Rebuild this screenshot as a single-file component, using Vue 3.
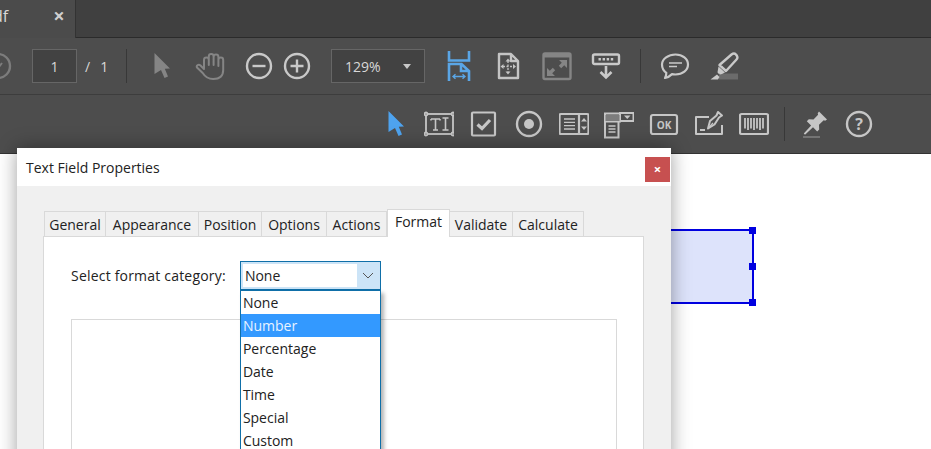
<script setup>
const tabs = ['General', 'Appearance', 'Position', 'Options', 'Actions', 'Format', 'Validate', 'Calculate']
const options = ['None', 'Number', 'Percentage', 'Date', 'Time', 'Special', 'Custom']
</script>

<template>
  <div class="page">
    <div class="tabbar">
      <div class="doc-tab">
        <span class="doc-name">df</span>
        <span class="doc-close">×</span>
      </div>
      <div class="tabbar-rest"></div>
    </div>

    <div class="toolbar toolbar-main">
      <svg class="icon icon-prev" viewBox="0 0 30 30" fill="none" stroke="#7c7c7c" stroke-width="2.4">
        <circle cx="15" cy="15" r="12" />
        <path d="M10 17l3 3 6-8" stroke-width="2" />
      </svg>
      <div class="page-box">1</div>
      <div class="page-total"><span>/</span><span>1</span></div>
      <div class="sep sep-page"></div>
      <svg class="icon tool-cursor" viewBox="0 0 30 30">
        <path d="M7.500 2L23 17.500L17.800 17.800L21 25.500L17.500 27L14 19L7.500 23Z" fill="#858585" />
      </svg>
      <svg class="icon tool-hand" viewBox="0 0 30 30" fill="none" stroke="#858585" stroke-width="2" stroke-linecap="round" stroke-linejoin="round">
        <path d="M9 17V9a2.400 2.400 0 0 1 4.800 0V14M13.800 14V5.500a2.400 2.400 0 0 1 4.800 0V14M18.600 14V6a2.400 2.400 0 0 1 4.800 0V15M23.400 15V9a2.400 2.400 0 0 1 4.800 0V19c0 6-4 9-10 9c-5 0-8-2-10.500-6L2 16.500c-1-2 1.500-3.500 3.500-2L9 18" />
      </svg>
      <svg class="icon tool" viewBox="0 0 30 30" fill="none" stroke="#c9c9c9" stroke-width="2.400">
        <circle cx="15" cy="15" r="12" />
        <path d="M8.500 15h13" />
      </svg>
      <svg class="icon tool-near" viewBox="0 0 30 30" fill="none" stroke="#c9c9c9" stroke-width="2.400">
        <circle cx="15" cy="15" r="12" />
        <path d="M8.500 15h13M15 8.500v13" />
      </svg>
      <div class="zoom-box">
        <span>129%</span>
        <i class="zoom-caret"></i>
      </div>
      <svg class="icon tool" viewBox="0 0 30 30" fill="none" stroke="#5aa6e6" stroke-width="2.600">
        <path d="M5 0v9.500h20V0" />
        <path d="M5 30V13h12.500L25 20v10M17 13V20h8" />
        <path d="M9 25.500h12M11.500 23.200L9 25.500l2.500 2.300M18.500 23.200L21 25.500l-2.500 2.300" stroke-width="1.400" />
      </svg>
      <svg class="icon tool" viewBox="0 0 30 30" fill="none" stroke="#c4c4c4" stroke-width="2.400" stroke-linejoin="round">
        <path d="M6 3h12l7 7v17H6zM18 3v7h7" />
        <path d="M15 10v11M10 15.500h10" stroke-width="1.300" stroke-dasharray="2 1.500" />
        <path d="M12.500 10.500h5L15 7.500zM12.500 20.500h5L15 23.500zM10.500 13v5L7.500 15.500zM20 13v5l3-2.500z" fill="#c4c4c4" stroke="none" />
      </svg>
      <svg class="icon tool" viewBox="0 0 30 30">
        <rect x="1.500" y="2.500" width="27" height="25.500" rx="1.500" fill="none" stroke="#858585" stroke-width="2.400" />
        <path d="M2 3h26v3.500H2z" fill="#858585" />
        <path d="M17 9h8v8l-2.800-2.800-3 3-2.400-2.400 3-3zM13 25H5v-8l2.800 2.800 3-3 2.400 2.400-3 3z" fill="#858585" />
      </svg>
      <svg class="icon tool" viewBox="0 0 30 30" fill="none" stroke="#c9c9c9">
        <rect x="2" y="3.500" width="26" height="9.500" rx="1.500" stroke-width="2.400" />
        <path d="M7.500 8.200h15" stroke-width="2.400" stroke-dasharray="2.400 1.700" />
        <path d="M15 15v11.500M9.500 21l5.500 5.500 5.500-5.500" stroke-width="2.600" />
      </svg>
      <div class="sep sep-tools"></div>
      <svg class="icon tool" viewBox="0 0 30 30" fill="none" stroke="#c9c9c9" stroke-width="2.200" stroke-linejoin="round">
        <path d="M15.500 3.500c7 0 12.500 4.200 12.500 10s-5.500 10-12.500 10c-1.200 0-2.400-.1-3.500-.4c-2 2-4.500 3.400-7 3.900c1-1.500 1.400-3 1.300-5.200C3.600 19.800 2 16.800 2 13.500c0-5.800 6.500-10 13.500-10z" />
        <path d="M9 12h13M9 15.500h8" stroke-width="1.500" />
      </svg>
      <svg class="icon tool" viewBox="0 0 30 30">
        <rect x="10" y="22.500" width="19" height="6" fill="#6b6b6b" />
        <path d="M22.500 3.500Q25 1.500 27 3.500L28 5Q29 7 27.500 8.500L17 20L10.500 14Z" fill="#4d4d4d" stroke="#c9c9c9" stroke-width="2.400" stroke-linejoin="round" />
        <path d="M9.500 15.500l6.500 6-3 1.500-2 .5-1-1-.7.300-.8-1.500z" fill="#c9c9c9" />
        <path d="M8 23.500l2.500 2.500-1.500 2.500H1.500z" fill="#c9c9c9" />
      </svg>
    </div>

    <div class="toolbar toolbar-form">
      <svg class="icon" viewBox="0 0 30 30">
        <path d="M7.500 2L23 17.500L17.800 17.800L21 25.500L17.500 27L14 19L7.500 23Z" fill="#4ea3ef" />
      </svg>
      <svg class="icon form-tool" viewBox="0 0 30 30" fill="none" stroke="#c6c6c6" stroke-width="1.800">
        <rect x="2" y="5" width="27" height="20" />
        <circle cx="2" cy="5" r="1.500" fill="#4d4d4d" />
        <circle cx="29" cy="5" r="1.500" fill="#4d4d4d" />
        <circle cx="2" cy="25" r="1.500" fill="#4d4d4d" />
        <circle cx="29" cy="25" r="1.500" fill="#4d4d4d" />
        <path d="M7 10h9M11.500 10v11M9 21h5M16 10v1.500M7 10v1.500" stroke-width="1.600" />
        <path d="M18.500 9h6M21.500 9v12M18.500 21h6" stroke-width="1.600" />
      </svg>
      <svg class="icon form-tool-wide" viewBox="0 0 30 30" fill="none" stroke="#c6c6c6" stroke-width="2.200">
        <rect x="3" y="3.500" width="23" height="23" rx="1" />
        <path d="M8.500 15.500l4.500 4 8-8.500" stroke-width="3.200" />
      </svg>
      <svg class="icon form-tool-wide" viewBox="0 0 30 30" fill="none" stroke="#c6c6c6" stroke-width="2.400">
        <circle cx="15" cy="15" r="12" />
        <circle cx="15" cy="15" r="5" fill="#c6c6c6" stroke="none" />
      </svg>
      <svg class="icon form-tool-wide" viewBox="0 0 30 30" fill="none" stroke="#c6c6c6" stroke-width="2.200">
        <rect x="0.500" y="5" width="29" height="20" rx="1.500" />
        <path d="M20 5v20" />
        <path d="M5 10h11M5 13.300h11M5 16.600h11M5 20h11" stroke-width="1.300" />
        <path d="M22 12.500l3-3.500 3 3.500zM22 17.500l3 3.500 3-3.500z" fill="#c6c6c6" stroke="none" />
      </svg>
      <svg class="icon form-tool-wide" viewBox="0 0 30 30" fill="none" stroke="#c6c6c6" stroke-width="2">
        <path d="M1 4.500h15v8H1zM16 4h13.500v8H16zM1 12.500h13.500v16H1z" />
        <path d="M1.500 6h14v6h-14z" fill="#7d7d7d" stroke="none" />
        <path d="M4.500 17h7M4.500 20h7M4.500 23h7" stroke-width="1.300" />
        <path d="M20 6.500h6.500L23.250 10z" fill="#c6c6c6" stroke="none" />
      </svg>
      <svg class="icon form-tool-wide" viewBox="0 0 30 30" fill="none" stroke="#c6c6c6" stroke-width="2.200">
        <rect x="2" y="6" width="26" height="19" rx="2" />
        <text x="15" y="19.500" class="ok-text" text-anchor="middle">OK</text>
      </svg>
      <svg class="icon form-tool-wide" viewBox="0 0 30 30" fill="none" stroke="#c6c6c6" stroke-width="2" stroke-linejoin="round">
        <path d="M15 8H2v17h26v-9" />
        <path d="M6 21h5" />
        <path d="M14 19.500l2-7.500 6.500-5.500 1.500-3.500 4 3.500-3 2-4.500 7z" />
        <path d="M14.500 19l4.500-5" stroke-width="1.300" />
      </svg>
      <svg class="icon form-tool-wide" viewBox="0 0 30 30" fill="none" stroke="#c6c6c6" stroke-width="2.200">
        <rect x="1" y="5" width="28" height="20" rx="1.500" />
        <path d="M6 9v10.500M9 9v12M12 9v10.500M15 9v12M18 9v10.500M21 9v12M24 9v10.500" stroke-width="1.800" />
      </svg>
      <div class="sep sep-form"></div>
      <svg class="icon pin" viewBox="0 0 30 30">
        <path d="M20 2.500l8 8-1.800 1.300-1.500-.6-4.700 4.600.2 4.700-2 2-4.200-4.300-8 7.500-1.200-1.200 7.300-8-4.300-4.200 2-2 4.700.2 4.600-4.700-.4-1.500z" fill="#c6c6c6" />
        <rect x="4" y="27" width="17" height="2" fill="#747474" />
      </svg>
      <svg class="icon form-tool-help" viewBox="0 0 30 30" fill="none" stroke="#c6c6c6" stroke-width="2.400">
        <circle cx="15" cy="15" r="12" />
        <text x="15" y="20.500" class="help-text" text-anchor="middle">?</text>
      </svg>
    </div>

    <div class="canvas">
      <div class="form-field">
        <i class="handle handle-top"></i>
        <i class="handle handle-mid"></i>
        <i class="handle handle-bottom"></i>
      </div>
    </div>

    <div class="dialog">
      <div class="dialog-title">
        <span>Text Field Properties</span>
        <button class="dialog-close">×</button>
      </div>
      <div class="dialog-body">
        <div class="tabs">
          <div v-for="tab in tabs" :key="tab" class="tab" :class="{ active: tab === 'Format' }">{{ tab }}</div>
        </div>
        <div class="panel">
          <div class="format-row">
            <label class="format-label">Select format category:</label>
            <div class="select">
              <div class="select-value">None</div>
              <div class="select-arrow">
                <svg width="12" height="7" viewBox="0 0 12 7" fill="none" stroke="#555" stroke-width="1">
                  <path d="M1 1l5 5 5-5" />
                </svg>
              </div>
              <ul class="select-list">
                <li v-for="opt in options" :key="opt" :class="{ selected: opt === 'Number' }">{{ opt }}</li>
              </ul>
            </div>
          </div>
          <div class="group-box"></div>
        </div>
      </div>
    </div>
  </div>
</template>

<style>
html,
body {
  margin: 0;
  overflow: hidden;
}
</style>

<style scoped>
* {
  box-sizing: border-box;
}

.page {
  position: relative;
  width: 931px;
  height: 449px;
  overflow: hidden;
  display: flex;
  flex-direction: column;
  background: #fff;
  font-family: "Open Sans", "Noto Sans", sans-serif;
  font-size: 14px;
}

.tabbar {
  display: flex;
  height: 38px;
  flex: none;
  background: #4b4b4b;
}

.doc-tab {
  width: 76px;
  flex: none;
  display: flex;
  align-items: center;
  color: #d8d8d8;
  padding-bottom: 7px;
  border-right: 1px solid #333;
}

.doc-name {
  margin-left: -7px;
  font-size: 16px;
}

.doc-close {
  margin-left: 45px;
  font-size: 20px;
  font-weight: 700;
  color: #cfcfcf;
}

.tabbar-rest {
  flex: 1;
  background: #404040;
  border-bottom: 1px solid #2b2b2b;
}

.toolbar {
  display: flex;
  align-items: center;
  flex: none;
  background: #4d4d4d;
}

.toolbar-main {
  height: 57px;
  border-bottom: 1px solid #3d3d3d;
}

.toolbar-main .icon {
  margin-bottom: 1px;
}

.toolbar-form {
  height: 59px;
  padding-left: 381px;
  border-bottom: 1px solid #333;
}

.icon {
  width: 30px;
  height: 30px;
  flex: none;
}

.ok-text {
  fill: #c6c6c6;
  stroke: none;
  font-size: 10px;
  font-weight: 700;
}

.help-text {
  fill: #c6c6c6;
  stroke: none;
  font-size: 16px;
  font-weight: 700;
}

.icon-prev {
  margin-left: -17px;
}

.page-box {
  width: 45px;
  height: 34px;
  margin-left: 19px;
  background: #424242;
  border: 1px solid #666;
  color: #d8d8d8;
  display: flex;
  align-items: center;
  justify-content: center;
}

.page-total {
  margin-left: 8px;
  color: #d8d8d8;
  width: 30px;
  display: flex;
  gap: 10px;
}

.sep {
  width: 1px;
  height: 34px;
  background: #383838;
  flex: none;
}

.sep-page {
  margin-left: 11px;
}

.tool-cursor {
  margin-left: 20px;
}

.tool-hand {
  margin-left: 18px;
}

.tool {
  margin-left: 19px;
}

.tool-near {
  margin-left: 8px;
}

.sep-tools {
  margin-left: 19px;
}

.zoom-box {
  width: 94px;
  height: 34px;
  margin-left: 19px;
  padding: 0 13px;
  background: #424242;
  border: 1px solid #666;
  color: #d8d8d8;
  display: flex;
  align-items: center;
  justify-content: space-between;
}

.zoom-caret {
  width: 0;
  height: 0;
  border-left: 4px solid transparent;
  border-right: 4px solid transparent;
  border-top: 5px solid #c8c8c8;
}

.form-tool {
  margin-left: 13px;
}

.form-tool-wide {
  margin-left: 15px;
}

.sep-form {
  margin-left: 15px;
}

.pin {
  margin-left: 14px;
}

.form-tool-help {
  margin-left: 15px;
}

.canvas {
  position: relative;
  flex: 1;
  background: #fff;
}

.form-field {
  position: absolute;
  left: 600px;
  top: 75px;
  width: 154px;
  height: 75px;
  border: 2px solid #0000e0;
  background: #dde3fb;
}

.handle {
  position: absolute;
  right: -4px;
  width: 7px;
  height: 7px;
  background: #0000e0;
}

.handle-top {
  top: -4px;
}

.handle-mid {
  top: 32px;
}

.handle-bottom {
  bottom: -4px;
}

.dialog {
  position: absolute;
  left: 17px;
  top: 148px;
  width: 654px;
  height: 420px;
  display: flex;
  flex-direction: column;
  background: #f0f0f0;
  box-shadow: 0 0 18px rgba(0, 0, 0, 0.38);
  color: #222;
}

.dialog-title {
  height: 38px;
  flex: none;
  background: #fff;
  display: flex;
  align-items: center;
  justify-content: space-between;
  padding: 0 1px 0 9px;
}

.dialog-close {
  width: 25px;
  height: 25px;
  border: none;
  background: #c75050;
  color: #fff;
  font-family: inherit;
  font-size: 13px;
  font-weight: 700;
  padding: 0;
  margin-top: 4px;
}

.dialog-body {
  flex: 1;
  padding: 23px 27px 0 26px;
}

.tabs {
  display: grid;
  grid-template-columns: 62px 93px 63px 65px 60px 63px 63px 71px;
  height: 28px;
  padding-left: 1px;
  position: relative;
  z-index: 1;
}

.tab {
  height: 26px;
  align-self: end;
  border: 1px solid #d9d9d9;
  border-left-width: 0;
  background: #f0f0f0;
  display: flex;
  align-items: center;
  justify-content: center;
}

.tab:first-child {
  border-left-width: 1px;
}

.tab.active {
  height: 28px;
  background: #fff;
  border-left-width: 1px;
  border-bottom-width: 0;
  padding-bottom: 4px;
}

.panel {
  height: 300px;
  margin-top: -1px;
  padding: 24px 26px 0 27px;
  background: #fff;
  border: 1px solid #d9d9d9;
}

.format-row {
  display: flex;
  align-items: center;
  gap: 14px;
}

.format-label {
  letter-spacing: 0.2px;
}

.select {
  position: relative;
  width: 141px;
  height: 29px;
  display: flex;
  border: 1px solid #0f6fa8;
  background: #cce4f7;
  padding: 2px 0 2px 2px;
}

.select-value {
  width: 114px;
  background: #fff;
  padding-left: 2px;
  line-height: 23px;
}

.select-arrow {
  flex: 1;
  display: flex;
  align-items: center;
  justify-content: center;
}

.select-list {
  position: absolute;
  left: -1px;
  top: 28px;
  width: 141px;
  margin: 0;
  padding: 0;
  list-style: none;
  background: #fff;
  border: 1px solid #0f6fa8;
  box-shadow: 3px 3px 4px rgba(0, 0, 0, 0.3);
  z-index: 2;
}

.select-list li {
  height: 23px;
  line-height: 23px;
  padding-left: 2px;
}

.select-list li.selected {
  background: #3399ff;
  color: #e8f3ff;
}

.group-box {
  width: 546px;
  height: 200px;
  margin-top: 29px;
  border: 1px solid #d9d9d9;
}
</style>
